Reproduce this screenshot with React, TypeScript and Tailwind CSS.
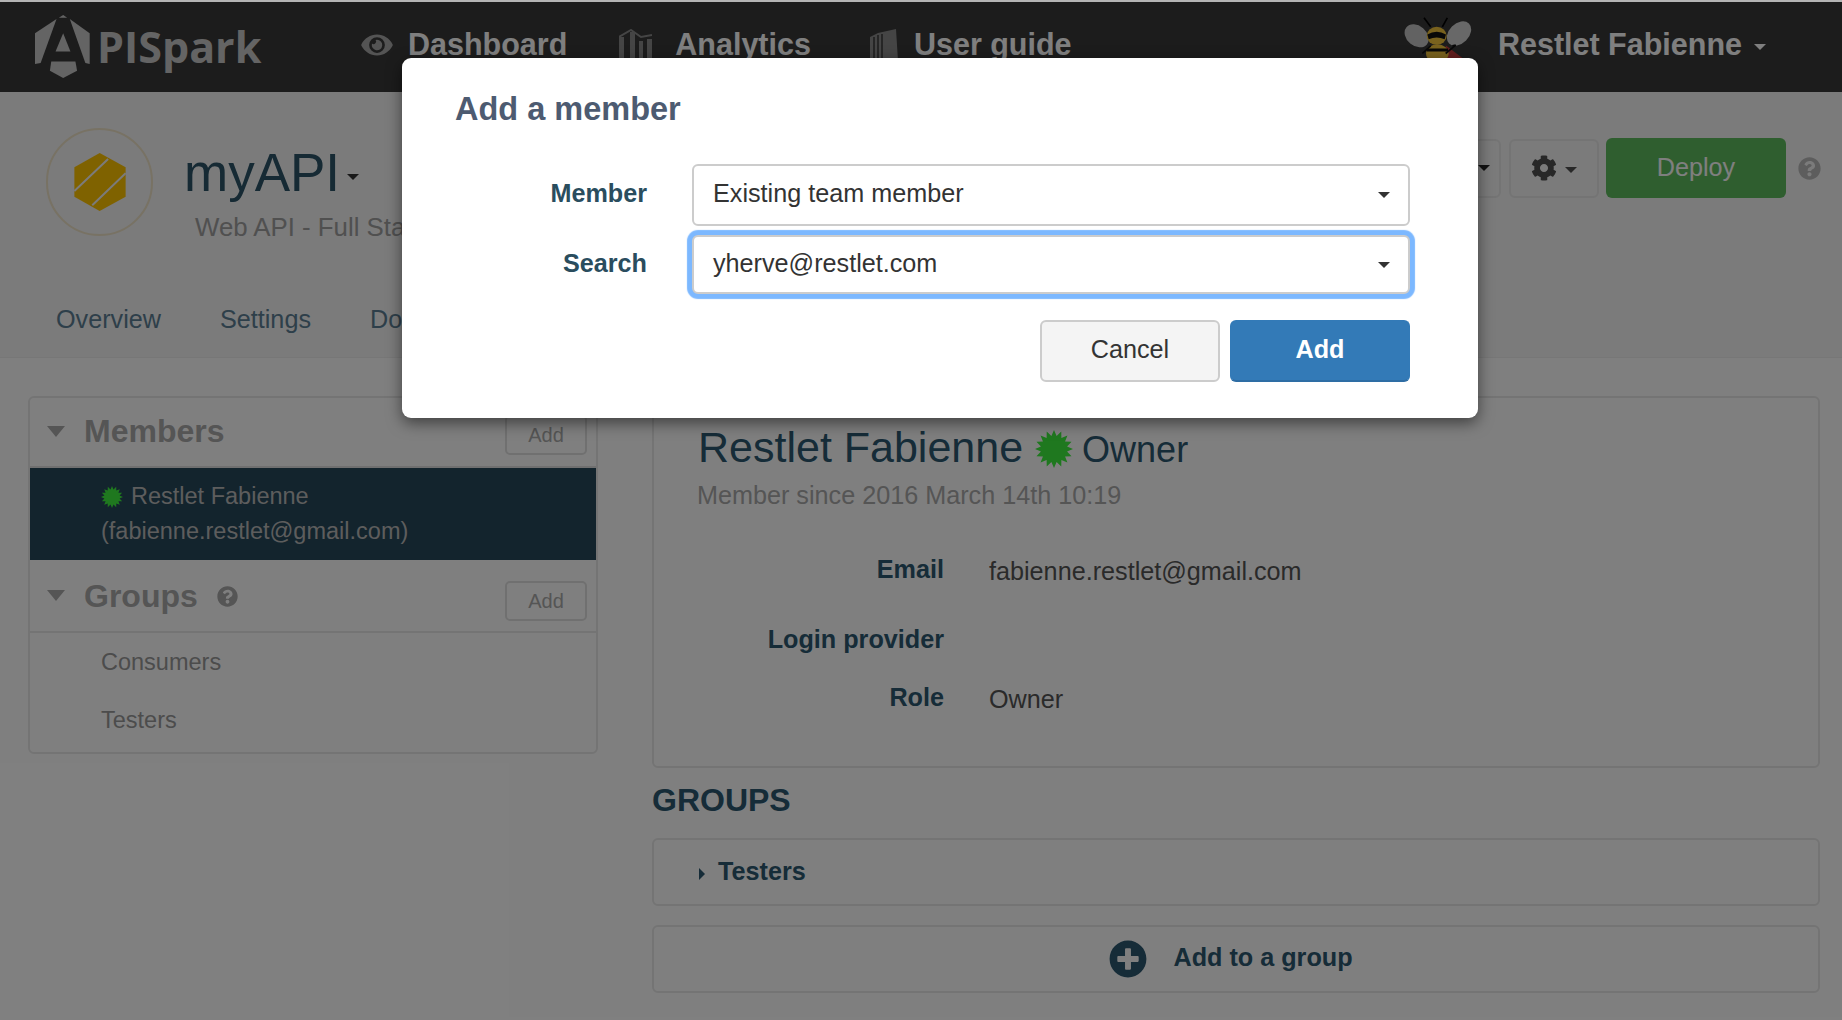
import { FaCog, FaEye, FaPlusCircle, FaQuestionCircle } from 'react-icons/fa';

const burstPoints = Array.from({ length: 32 }, (_, i) => {
  const r = i % 2 === 0 ? 50 : 35;
  const a = (i / 32) * Math.PI * 2;
  return `${50 + r * Math.cos(a)},${50 + r * Math.sin(a)}`;
}).join(' ');

function Burst({ className }: { className: string }) {
  return (
    <svg viewBox="0 0 100 100" className={className}>
      <polygon points={burstPoints} fill="#3ff03f" />
    </svg>
  );
}

function Logo() {
  return (
    <svg viewBox="40 28 172 194" className="w-[57px] h-[65px] shrink-0 mt-[3px]" fill="#c8c8c8">
      <polygon points="43,85 108,42 60,175 43,178" />
      <polygon points="148,42 208,85 208,178 195,175" />
      <polygon points="128,85 150,140 105,140" />
      <polygon points="115,38 128,30 140,38" />
      <polygon points="92,170 165,170 170,198 128,220 88,198" />
    </svg>
  );
}

function AnalyticsIcon() {
  return (
    <svg viewBox="0 0 33 32" className="w-[33px] h-[32px] shrink-0" fill="#8a8a8a">
      <rect x="0" y="8" width="5" height="24" />
      <rect x="11" y="3" width="5" height="29" />
      <rect x="20" y="12" width="4" height="20" />
      <rect x="28" y="10" width="5" height="22" />
      <path d="M0 8 L12 1 L22 8 L33 6" fill="none" stroke="#8a8a8a" strokeWidth="2" />
    </svg>
  );
}

function BookIcon() {
  return (
    <svg viewBox="0 0 28 32" className="w-[28px] h-[32px] shrink-0">
      <polygon points="8,4 26,0 28,32 0,32 0,8" fill="#8a8a8a" />
      <path d="M4 8V32M8 6V32M12 5V32" stroke="#383838" strokeWidth="1.5" />
    </svg>
  );
}

function Bee() {
  return (
    <svg viewBox="40 30 210 140" className="w-[70px] h-[47px] shrink-0 mb-[13px]">
      <ellipse cx="78" cy="92" rx="40" ry="30" transform="rotate(40 78 92)" fill="#c4c4c4" />
      <ellipse cx="205" cy="85" rx="42" ry="30" transform="rotate(-45 205 85)" fill="#d0d0d0" />
      <path d="M120 65 L100 38 M155 65 L170 38" stroke="#000" strokeWidth="5" fill="none" />
      <path d="M165 120 L230 170 L170 170 Z" fill="#c43a3a" />
      <ellipse cx="140" cy="145" rx="34" ry="28" fill="#f2c43c" />
      <rect x="108" y="130" width="64" height="9" fill="#111" />
      <ellipse cx="138" cy="92" rx="30" ry="27" fill="#f2c43c" />
      <path d="M110 88 Q138 72 166 88 L162 102 Q138 92 114 102 Z" fill="#111" />
      <path d="M95 145 L120 122 M185 122 L195 120 L165 145" stroke="#111" strokeWidth="5" fill="none" />
    </svg>
  );
}

function Caret({ className }: { className: string }) {
  return <span className={`block w-0 h-0 border-x-[6px] border-t-[6px] border-x-transparent ${className}`} />;
}

function Navbar() {
  return (
    <div className="h-[90px] bg-[#383838] flex items-center pb-[4px] pl-[34px] pr-[76px] text-white font-bold text-[30.5px]">
      <Logo />
      <span className="ml-[6px] mt-[2px] w-[170px] font-['Open_Sans',sans-serif] text-[43px] leading-none text-[#c8c8c8]">PISpark</span>
      <FaEye className="ml-[94px] w-[32px] h-[28px] shrink-0 text-[#a8a8a8]" />
      <span className="ml-[15px]">Dashboard</span>
      <span className="ml-[52px] flex items-center">
        <AnalyticsIcon />
        <span className="ml-[23px]">Analytics</span>
      </span>
      <span className="ml-[59px] flex items-center">
        <BookIcon />
        <span className="ml-[16px]">User guide</span>
      </span>
      <span className="ml-auto flex items-center">
        <Bee />
        <span className="ml-[24px]">Restlet Fabienne</span>
        <Caret className="ml-[12px] mt-[4px] border-t-white" />
      </span>
    </div>
  );
}

function ProjectHeader() {
  return (
    <div className="h-[266px] bg-[#f6f6f6] border-b border-[#eeeeee] pt-[36px]">
      <div className="flex items-start pl-[46px] pr-[21px]">
        <div className="w-[107px] h-[108px] rounded-full border-2 border-[#f0e4c8] flex items-center justify-center shrink-0">
          <svg viewBox="135 130 152 172" className="w-[52px] h-[58px]">
            <polygon points="210,130 287,172 287,260 210,302 135,260 135,172" fill="#ffc400" />
            <path d="M135 243 L235 148 M188 285 L287 190" stroke="#f6f6f6" strokeWidth="6" />
          </svg>
        </div>
        <div className="ml-[31px] mt-[15px]">
          <div className="flex items-center">
            <span className="text-[53px] leading-[60px] text-[#2c5468]">myAPI</span>
            <Caret className="ml-[7px] mt-[8px] border-t-[#333333]" />
          </div>
          <div className="ml-[11px] mt-[7px] text-[25.8px] leading-[34px] text-[#a0a0a0]">Web API - Full Stack</div>
        </div>
        <div className="ml-auto mt-[10px] flex items-center">
          <div className="w-[90px] h-[59px] rounded-[6px] border-2 border-[#e8e8e8] flex items-center justify-end pr-[9px]">
            <Caret className="border-t-[#222222]" />
          </div>
          <div className="ml-[8px] w-[90px] h-[59px] rounded-[6px] border-2 border-[#e8e8e8] flex items-center justify-center text-[#505050]">
            <FaCog className="w-[26px] h-[26px]" />
            <Caret className="ml-[8px] mt-[3px] border-t-[#505050]" />
          </div>
          <div className="ml-[7px] w-[180px] h-[60px] rounded-[6px] bg-[#5fbc5f] flex items-center justify-center text-[25.2px] text-white">Deploy</div>
          <FaQuestionCircle className="ml-[12px] w-[23px] h-[23px] text-[#bbbbbb]" />
        </div>
      </div>
      <div className="mt-[58px] pl-[56px] flex gap-[59px] text-[25.2px] leading-[34px] text-[#5c7f94]">
        <span>Overview</span>
        <span>Settings</span>
        <span>Documentation</span>
      </div>
    </div>
  );
}

function SmallAdd({ className }: { className: string }) {
  return (
    <div className={`w-[82px] h-[40px] rounded-[5px] border-2 border-[#e0e0e0] flex items-center justify-center text-[20px] text-[#aaaaaa] ${className}`}>
      Add
    </div>
  );
}

function Sidebar() {
  return (
    <div className="w-[570px] h-[358px] border-2 border-[#e8e8e8] rounded-[6px] text-[23.5px] overflow-hidden shrink-0">
      <div className="h-[70px] flex items-center pl-[17px] pr-[9px] pb-[2px] border-b-2 border-[#e0e0e0]">
        <span className="block w-0 h-0 border-x-[9px] border-t-[11px] border-x-transparent border-t-[#aaaaaa]" />
        <span className="ml-[19px] text-[32px] font-bold text-[#aaaaaa]">Members</span>
        <SmallAdd className="ml-auto mt-[8px]" />
      </div>
      <div className="h-[92px] bg-[#26485a] pl-[71px] pt-[11px] leading-[35px] text-[#bbbbbb]">
        <div className="flex items-center">
          <Burst className="w-[22px] h-[22px]" />
          <span className="ml-[8px]">Restlet Fabienne</span>
        </div>
        <div>(fabienne.restlet@gmail.com)</div>
      </div>
      <div className="h-[73px] flex items-center pl-[17px] pr-[9px] border-b-2 border-[#e8e8e8]">
        <span className="block w-0 h-0 border-x-[9px] border-t-[11px] border-x-transparent border-t-[#aaaaaa]" />
        <span className="ml-[19px] text-[32px] font-bold text-[#aaaaaa]">Groups</span>
        <FaQuestionCircle className="ml-[19px] mt-[2px] w-[21px] h-[21px] text-[#aaaaaa]" />
        <SmallAdd className="ml-auto mt-[10px]" />
      </div>
      <div className="h-[58px] pt-[2px] flex items-center pl-[71px] text-[#999999]">Consumers</div>
      <div className="h-[58px] pt-[2px] flex items-center pl-[71px] text-[#999999]">Testers</div>
    </div>
  );
}

function InfoRow({ label, value, className }: { label: string; value?: string; className: string }) {
  return (
    <div className={`flex items-start leading-[36px] ${className}`}>
      <span className="w-[290px] text-right font-bold text-[#2c5870]">{label}</span>
      {value && <span className="ml-[45px] mt-[2px] text-[#555555]">{value}</span>}
    </div>
  );
}

function MemberDetail() {
  return (
    <div className="w-[1168px] shrink-0 text-[25.2px]">
      <div className="h-[372px] border-2 border-[#e8e8e8] rounded-[6px] pt-[24px]">
        <div className="pl-[44px] flex items-baseline text-[#2c5870]">
          <span className="text-[43px] leading-[50px]">Restlet Fabienne</span>
          <Burst className="ml-[12px] self-center w-[38px] h-[38px]" />
          <span className="ml-[9px] text-[36px] leading-[50px]">Owner</span>
        </div>
        <div className="pl-[43px] mt-[3px] leading-[34px] text-[#aaaaaa]">Member since 2016 March 14th 10:19</div>
        <InfoRow className="mt-[39px]" label="Email" value="fabienne.restlet@gmail.com" />
        <InfoRow className="mt-[32px]" label="Login provider" />
        <InfoRow className="mt-[22px]" label="Role" value="Owner" />
      </div>
      <h3 className="mt-[12px] text-[32px] leading-[40px] font-bold text-[#2c5870]">GROUPS</h3>
      <div className="mt-[18px] h-[68px] border-2 border-[#e8e8e8] rounded-[6px] flex items-center pl-[45px] font-bold text-[#2c5870]">
        <span className="block mt-[4px] w-0 h-0 border-y-[6px] border-l-[6px] border-y-transparent border-l-[#2c5870]" />
        <span className="ml-[13px] mb-[1px]">Testers</span>
      </div>
      <div className="mt-[19px] h-[68px] border-2 border-[#e8e8e8] rounded-[6px] flex items-center justify-center pr-[10px] font-bold text-[#2c5870]">
        <FaPlusCircle className="w-[38px] h-[38px]" />
        <span className="ml-[26px] mb-[2px]">Add to a group</span>
      </div>
    </div>
  );
}

function SelectBox({ value, className }: { value: string; className: string }) {
  return (
    <div className={`w-[718px] rounded-[6px] border-2 border-[#cccccc] bg-white flex items-center pl-[19px] pr-[18px] text-[#333333] ${className}`}>
      <span className="mb-[2px]">{value}</span>
      <span className="ml-auto block w-0 h-0 border-x-[6px] border-t-[6px] border-x-transparent border-t-[#333333]" />
    </div>
  );
}

function AddMemberModal() {
  return (
    <div className="absolute left-[402px] top-[58px] w-[1076px] h-[360px] bg-white rounded-[9px] shadow-[0_5px_15px_rgba(0,0,0,0.5)] pt-[31px] text-[25.2px]">
      <h2 className="pl-[53px] text-[32.5px] leading-[40px] font-bold text-[#4d5b71]">Add a member</h2>
      <div className="mt-[35px] flex items-center">
        <label className="w-[245px] mb-[2px] text-right font-bold text-[#2a4d5e]">Member</label>
        <SelectBox value="Existing team member" className="ml-[45px] h-[62px]" />
      </div>
      <div className="mt-[9px] flex items-center">
        <label className="w-[245px] mb-[2px] text-right font-bold text-[#2a4d5e]">Search</label>
        <SelectBox value="yherve@restlet.com" className="ml-[45px] h-[59px] shadow-[0_0_1px_5px_#7cb8ff]" />
      </div>
      <div className="mt-[26px] pr-[68px] flex justify-end gap-[10px]">
        <button className="w-[180px] h-[62px] pb-[2px] rounded-[6px] border-2 border-[#cccccc] bg-[#f4f4f4] text-[#333333]">Cancel</button>
        <button className="w-[180px] h-[62px] pb-[2px] rounded-[6px] border-2 border-[#2e6da4] border-t-[#337ab7] border-x-[#337ab7] bg-[#337ab7] font-bold text-white">Add</button>
      </div>
    </div>
  );
}

export default function App() {
  return (
    <div className="relative h-screen w-full overflow-hidden bg-white font-['Liberation_Sans',Arial,sans-serif]">
      <div className="h-[2px] bg-[#b4b4b4]" />
      <Navbar />
      <ProjectHeader />
      <div className="flex gap-[54px] pl-[28px] pt-[38px]">
        <Sidebar />
        <MemberDetail />
      </div>
      <div className="absolute inset-x-0 top-[2px] bottom-0 bg-black/50" />
      <AddMemberModal />
    </div>
  );
}
